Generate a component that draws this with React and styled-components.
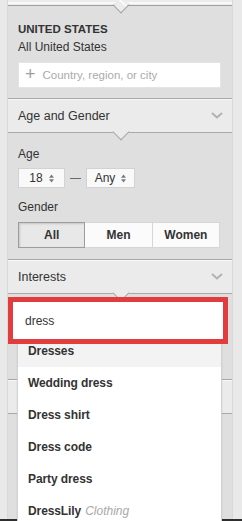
import React from "react";
import styled, { createGlobalStyle } from "styled-components";

const GlobalStyle = createGlobalStyle`
  html, body { margin: 0; padding: 0; background: #e9e9e9; }
  body { font-family: "Liberation Sans", Arial, sans-serif; color: #333; }
  * { box-sizing: border-box; }
`;

const Page = styled.div`
  height: 521px;
  display: flex;
  flex-direction: column;
  overflow: hidden;
  background: #e9e9e9;
`;

const Main = styled.div`
  flex: 1;
  min-height: 0;
  display: flex;
  padding: 0 10px 0 8px;
`;

const Panel = styled.div`
  width: 224px;
  display: flex;
  flex-direction: column;
  background: #dfdfdf;
  box-shadow: -1px 0 0 #d9d9d9, 1px 0 0 #d9d9d9;
`;

const BottomBar = styled.div`
  height: 2px;
  background: #2e2e2e;
`;

const Notched = styled.div`
  position: relative;
  &::after {
    content: "";
    position: absolute;
    left: 50%;
    bottom: -6px;
    width: 11px;
    height: 11px;
    margin-left: -5px;
    background: inherit;
    border-right: 1px solid #a6a6a6;
    border-bottom: 1px solid #a6a6a6;
    transform: rotate(45deg);
    z-index: 1;
  }
`;

const TopCap = styled(Notched)`
  height: 6px;
  background: linear-gradient(#ececec 0 2px, #f8f8f8 2px 4px, #ececec 4px);
  border-bottom: 1px solid #a0a0a0;
`;

const SectionHeader = styled(Notched)`
  height: 35px;
  display: flex;
  align-items: center;
  justify-content: space-between;
  padding: 0 9px 0 10px;
  background: #ebebeb;
  border-top: 1px solid #a8a8a8;
  border-bottom: 1px solid #a8a8a8;
  box-shadow: inset 0 1px 0 #f7f7f7;
  font-size: 12.5px;
  color: #333;
`;

const Body = styled.div`
  position: relative;
  padding: ${(p) => p.$pad};
  height: ${(p) => (p.$h ? `${p.$h}px` : "auto")};
`;

const Title = styled.div`
  font-size: 11.5px;
  font-weight: bold;
  line-height: 14px;
  text-transform: uppercase;
  color: #333;
  margin-top: 1px;
`;

const Label = styled.div`
  font-size: 12px;
  line-height: 15px;
  color: #333;
  margin-top: ${(p) => p.$mt || 0}px;
`;

const LocationInput = styled.div`
  margin-top: 7px;
  height: 26px;
  background: #fff;
  border: 1px solid #e4e4e4;
  display: flex;
  align-items: center;
  padding-left: 6px;
  font-size: 11.5px;
  color: #ababab;
  gap: 7px;
`;

const PlusSign = styled.span`
  font-size: 18px;
  line-height: 1;
  color: #a0a0a0;
  margin-top: -2px;
`;

const SelectRow = styled.div`
  display: flex;
  align-items: center;
  margin-top: 6px;
`;

const Select = styled.div`
  width: ${(p) => p.$w}px;
  height: 20px;
  background: #f9f9f9;
  border: 1px solid #d2d2d2;
  display: flex;
  align-items: center;
  justify-content: center;
  gap: 6px;
  font-size: 12px;
  color: #333;
`;

const Dash = styled.span`
  width: 11px;
  height: 1px;
  background: #6a6a6a;
  margin: 0 5px;
`;

const Segmented = styled.div`
  margin-top: 7px;
  display: grid;
  grid-template-columns: repeat(3, 1fr);
  height: 26px;
`;

const Segment = styled.div`
  display: flex;
  align-items: center;
  justify-content: center;
  font-size: 12px;
  font-weight: bold;
  color: #333;
  background: ${(p) => (p.$active ? "#e8e8e8" : "#fbfbfb")};
  border: 1px solid ${(p) => (p.$active ? "#9d9d9d" : "#d6d6d6")};
  border-left-width: ${(p) => (p.$active ? 1 : 0)}px;
  box-shadow: ${(p) => (p.$active ? "inset 1px 1px 2px rgba(0,0,0,0.15)" : "none")};
`;

const Highlight = styled.div`
  position: relative;
  z-index: 6;
  width: 220px;
  height: 47px;
  border: 5px solid #e23c3c;
  background: #fff;
  display: flex;
  align-items: center;
  padding-left: 12px;
  font-size: 12px;
  color: #333;
`;

const Dropdown = styled.div`
  position: absolute;
  z-index: 5;
  top: 41px;
  left: 9px;
  width: 205px;
  background: #fff;
  border: 1px solid #d2d2d2;
  border-top: none;
  box-shadow: 0 1px 2px rgba(0, 0, 0, 0.08);
`;

const Item = styled.div`
  height: 32px;
  display: flex;
  align-items: center;
  gap: 4px;
  padding-left: 10px;
  font-size: 12px;
  font-weight: bold;
  letter-spacing: -0.1px;
  color: #333;
  background: ${(p) => (p.$active ? "#f3f3f3" : "#fff")};
`;

const Category = styled.span`
  font-weight: normal;
  font-style: italic;
  color: #a8a8a8;
  letter-spacing: 0;
`;

const Filler = styled.div`
  flex: 1;
`;

const Chevron = () => (
  <svg width="12" height="7" viewBox="0 0 12 7">
    <polyline points="1,1 6,5.5 11,1" fill="none" stroke="#b2b2b2" strokeWidth="2" />
  </svg>
);

const UpDown = () => (
  <svg width="5" height="9" viewBox="0 0 5 9">
    <path d="M0 3.8 L2.5 0.6 L5 3.8 Z M0 5.2 L2.5 8.4 L5 5.2 Z" fill="#7a7a7a" />
  </svg>
);

const suggestions = [
  { name: "Dresses", active: true },
  { name: "Wedding dress" },
  { name: "Dress shirt" },
  { name: "Dress code" },
  { name: "Party dress" },
  { name: "DressLily", category: "Clothing" },
];

export default function App() {
  return (
    <>
      <GlobalStyle />
      <Page>
        <Main>
          <Panel>
            <TopCap />
            <Body $pad="15px 11px 10px 10px">
              <Title>United States</Title>
              <Label $mt={4}>All United States</Label>
              <LocationInput>
                <PlusSign>+</PlusSign>
                <span>Country, region, or city</span>
              </LocationInput>
            </Body>
            <SectionHeader>
              <span>Age and Gender</span>
              <Chevron />
            </SectionHeader>
            <Body $pad="14px 12px 11px 10px">
              <Label>Age</Label>
              <SelectRow>
                <Select $w={47}>
                  <span>18</span>
                  <UpDown />
                </Select>
                <Dash />
                <Select $w={49}>
                  <span>Any</span>
                  <UpDown />
                </Select>
              </SelectRow>
              <Label $mt={12}>Gender</Label>
              <Segmented>
                <Segment $active>All</Segment>
                <Segment>Men</Segment>
                <Segment>Women</Segment>
              </Segmented>
            </Body>
            <SectionHeader>
              <span>Interests</span>
              <Chevron />
            </SectionHeader>
            <Body $pad="3px 4px 0 0" $h={85}>
              <Highlight>dress</Highlight>
              <Dropdown>
                {suggestions.map((s) => (
                  <Item key={s.name} $active={s.active}>
                    <span>{s.name}</span>
                    {s.category && <Category>{s.category}</Category>}
                  </Item>
                ))}
              </Dropdown>
            </Body>
            <SectionHeader />
            <Filler />
          </Panel>
        </Main>
        <BottomBar />
      </Page>
    </>
  );
}
